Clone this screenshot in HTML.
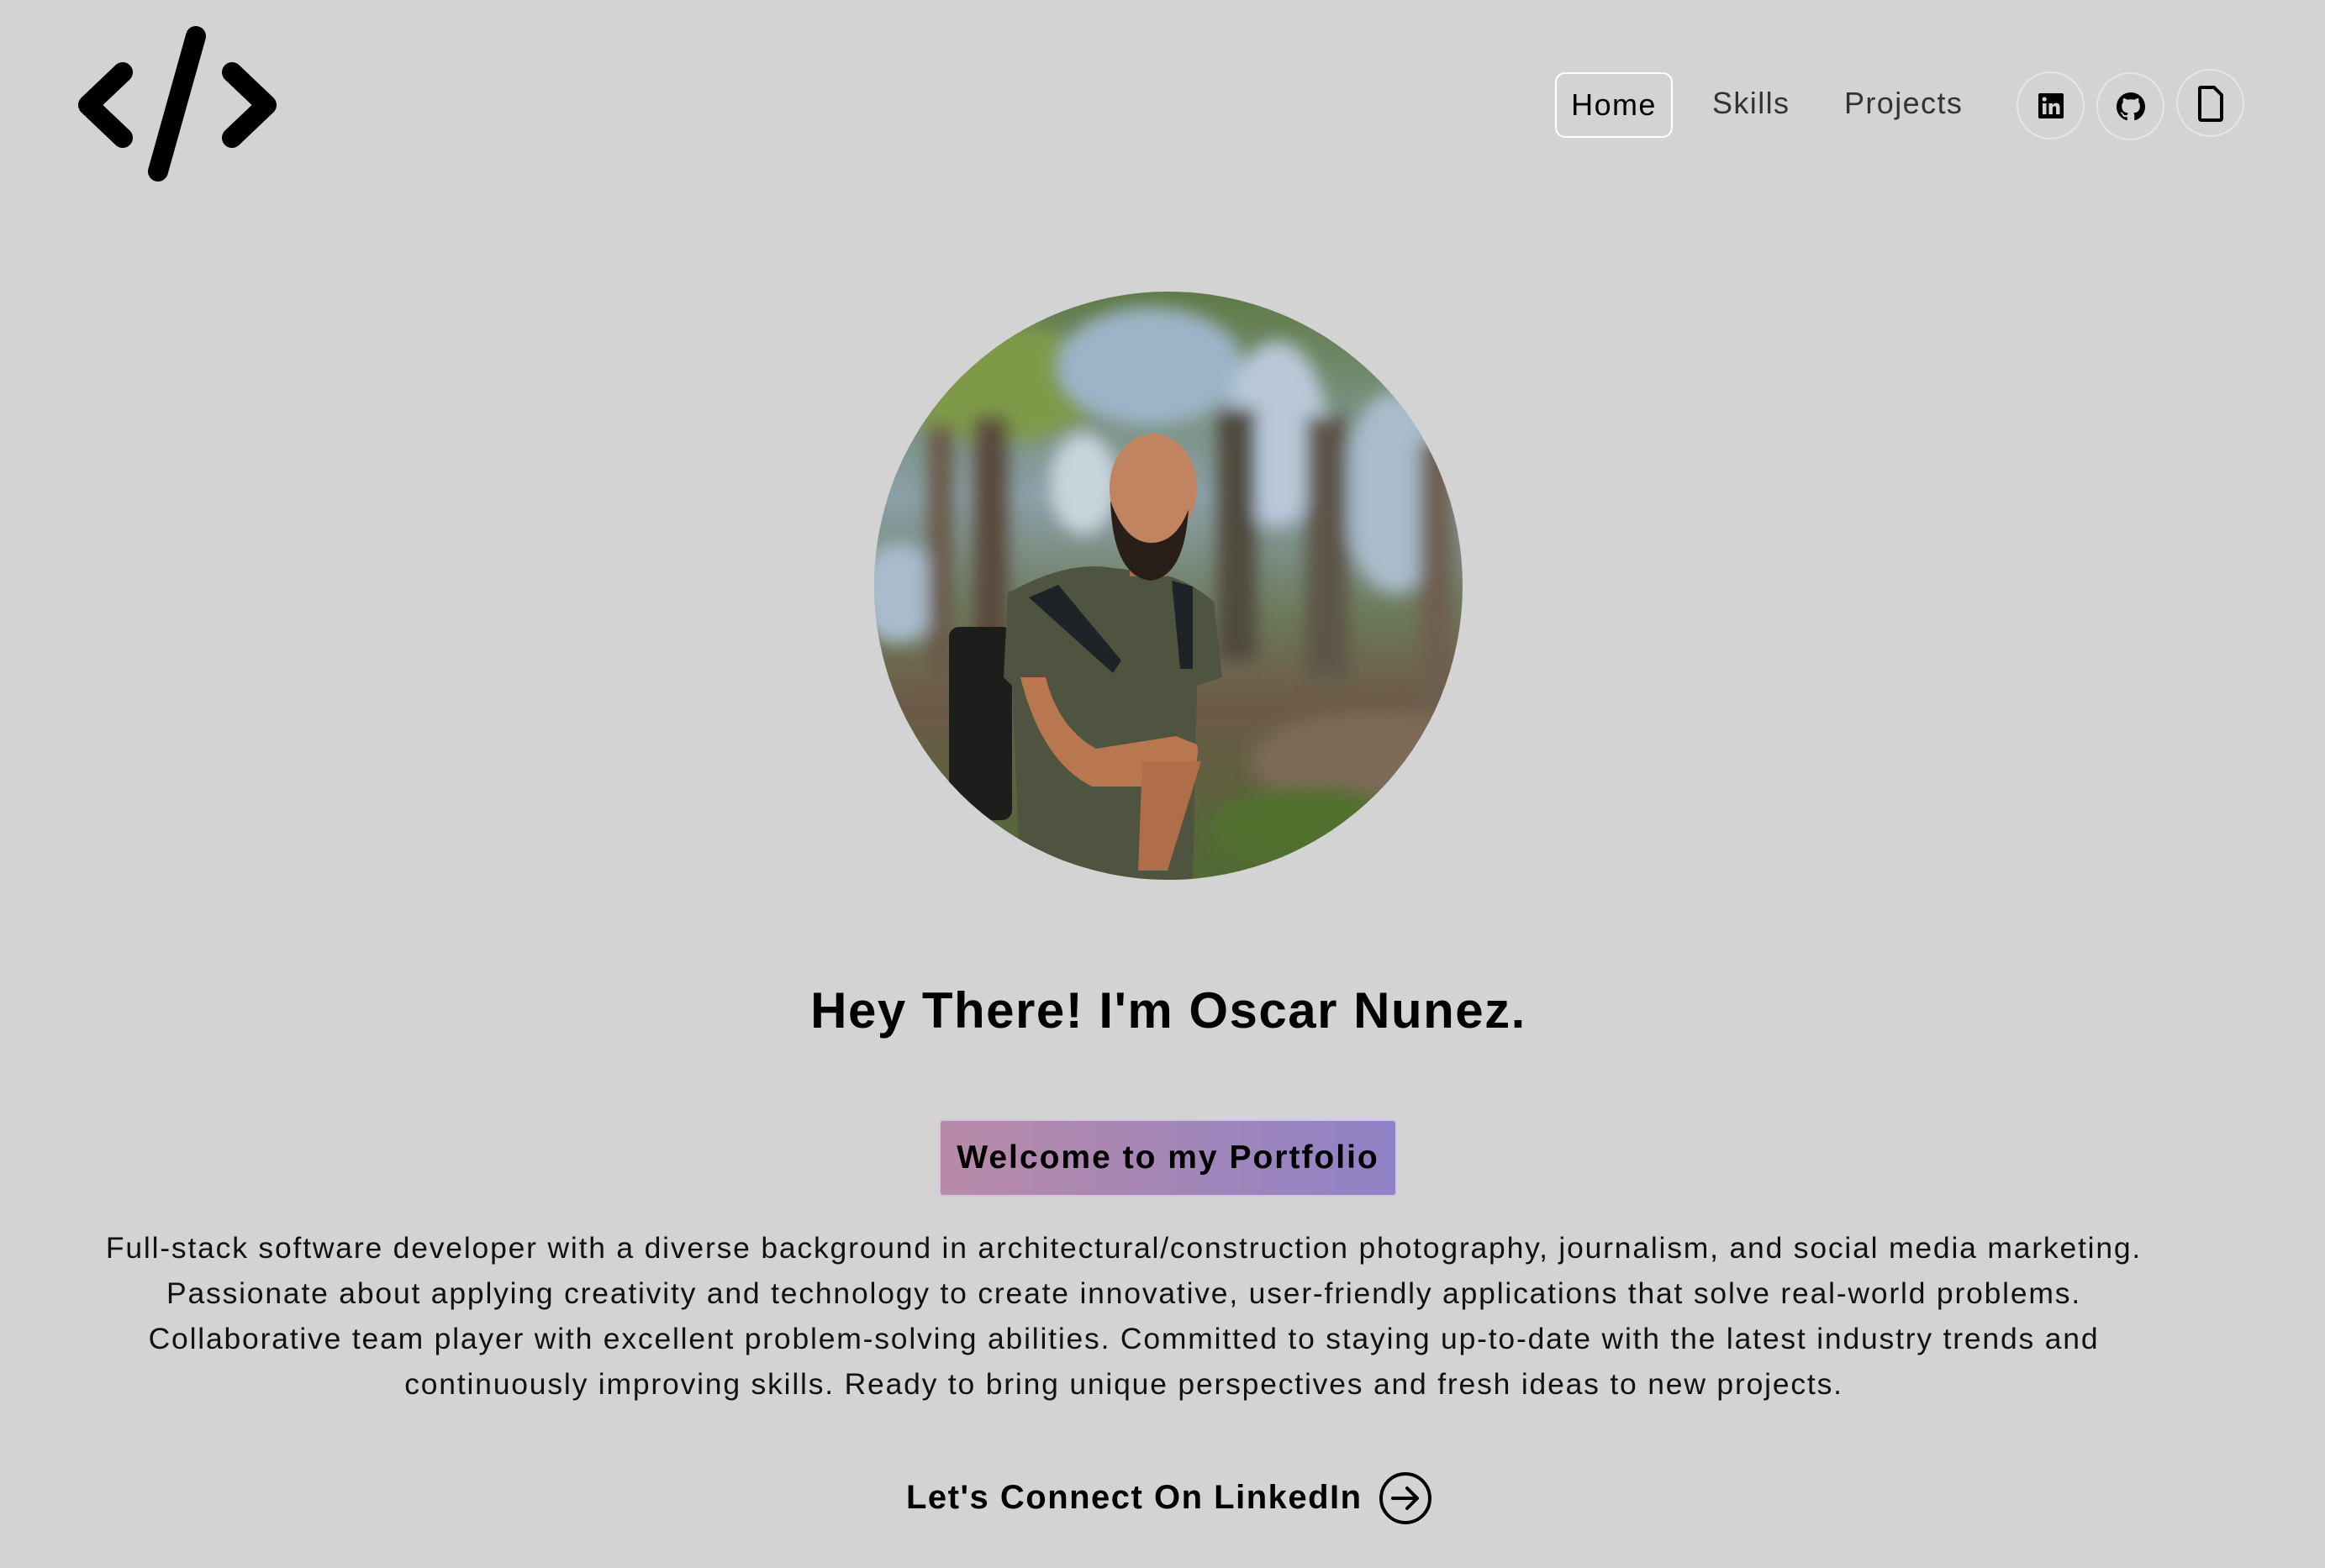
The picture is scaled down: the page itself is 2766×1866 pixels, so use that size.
<!DOCTYPE html>
<html><head><meta charset="utf-8"><style>
html,body{margin:0;padding:0;background:#d3d3d3;width:2766px;height:1866px;overflow:hidden;font-family:"Liberation Sans",Arial,sans-serif;color:#000}
.abs{position:absolute}
.nav{font-size:36px;letter-spacing:1.4px;color:#333}
.home{left:1850px;top:86px;width:136px;height:74px;border:2px solid #fff;border-radius:12px;color:#000;display:flex;align-items:center;justify-content:center;box-sizing:content-box}
.ic{width:81px;height:81px;border:2px solid #e6e6e6;border-radius:50%;display:flex;align-items:center;justify-content:center;box-sizing:border-box}
.c{left:0;width:2766px;text-align:center;white-space:nowrap}
</style></head><body>
<svg class="abs" style="left:0;top:0" width="400" height="240" viewBox="0 0 400 240">
<g fill="none" stroke="#000" stroke-width="24" stroke-linecap="round" stroke-linejoin="round">
<polyline points="146,86 105,125 146,164"/>
<line x1="233" y1="43" x2="188" y2="204"/>
<polyline points="276,86 317,125 276,164"/>
</g></svg>

<div class="abs nav home">Home</div>
<div class="abs nav" style="left:2037px;top:102px">Skills</div>
<div class="abs nav" style="left:2194px;top:102px">Projects</div>

<div class="abs ic" style="left:2399px;top:85px"><svg width="32" height="32" viewBox="0 0 32 32"><rect x="1" y="1" width="30" height="30" rx="2" fill="#000"/><rect x="6" y="13" width="4.5" height="13" fill="#d3d3d3"/><circle cx="8.2" cy="8" r="2.6" fill="#d3d3d3"/><path d="M13.5 13h4.3v2c1-1.6 2.6-2.4 4.4-2.4 3.4 0 4.3 2.2 4.3 5.3V26h-4.4v-7c0-1.6-.4-2.8-1.9-2.8s-2.3 1.1-2.3 2.8v7h-4.4z" fill="#d3d3d3"/></svg></div>
<div class="abs ic" style="left:2494px;top:86px"><svg width="34" height="34" viewBox="0 0 16 16"><path fill="#000" d="M8 0C3.58 0 0 3.580 0 8c0 3.54 2.29 6.53 5.47 7.59.4.07.55-.17.55-.38 0-.19-.01-.82-.01-1.49-2.01.37-2.530-.49-2.69-.94-.09-.23-.48-.94-.82-1.130-.28-.15-.68-.52-.01-.53.63-.01 1.08.58 1.23.82.72 1.21 1.87.87 2.330.66.07-.52.28-.87.51-1.07-1.78-.2-3.64-.89-3.64-3.950 0-.87.31-1.59.82-2.15-.08-.2-.36-1.02.08-2.12 0 0 .67-.21 2.2.82.64-.18 1.32-.27 2-.27.68 0 1.36.09 2 .27 1.53-1.04 2.2-.82 2.2-.82.44 1.1.16 1.92.08 2.12.51.56.82 1.27.82 2.150 0 3.07-1.87 3.75-3.65 3.95.29.25.54.73.54 1.48 0 1.07-.01 1.93-.01 2.2 0 .21.15.46.55.38A8.013 8.013 0 0016 8c0-4.42-3.58-8-8-8z"/></svg></div>
<div class="abs ic" style="left:2589px;top:82px"><svg width="34" height="44" viewBox="0 0 34 44"><path d="M5 3h16l9 9v28a2 2 0 0 1-2 2H6a2 2 0 0 1-2-2V5a2 2 0 0 1 1-2z" fill="none" stroke="#000" stroke-width="4" stroke-linejoin="round"/></svg></div>

<svg class="abs" style="left:1039px;top:346px" width="702" height="702" viewBox="0 0 702 702">
<defs><clipPath id="cp"><circle cx="351" cy="351" r="350"/></clipPath>
<linearGradient id="bg" x1="0" y1="0" x2="0" y2="1"><stop offset="0" stop-color="#5f7a45"/><stop offset=".35" stop-color="#8aa0a8"/><stop offset=".55" stop-color="#6c7a5a"/><stop offset=".7" stop-color="#6d5a48"/><stop offset="1" stop-color="#4f6a35"/></linearGradient>
<filter id="bl"><feGaussianBlur stdDeviation="10"/></filter></defs>
<g clip-path="url(#cp)">
<rect width="702" height="702" fill="url(#bg)"/>
<g filter="url(#bl)">
<ellipse cx="150" cy="110" rx="130" ry="70" fill="#7e9a4a"/>
<ellipse cx="330" cy="90" rx="110" ry="70" fill="#9db4c8"/>
<ellipse cx="480" cy="170" rx="60" ry="110" fill="#b8c8d8"/>
<ellipse cx="620" cy="240" rx="60" ry="120" fill="#a9bccb"/>
<ellipse cx="30" cy="360" rx="50" ry="60" fill="#a8bccc"/>
<ellipse cx="250" cy="230" rx="40" ry="60" fill="#c8d4dc"/>
<rect x="120" y="150" width="40" height="330" fill="#5a4a3e"/>
<rect x="65" y="160" width="30" height="300" fill="#6b5a4a"/>
<rect x="410" y="140" width="45" height="300" fill="#4f4a3e"/>
<rect x="515" y="150" width="50" height="310" fill="#5d5447"/>
<rect x="650" y="180" width="40" height="380" fill="#6e5f50"/>
<ellipse cx="600" cy="560" rx="150" ry="60" fill="#7d6a58"/>
<ellipse cx="520" cy="640" rx="120" ry="50" fill="#51702e"/>
</g>
<rect x="90" y="400" width="75" height="230" rx="12" fill="#1c1e1c"/>
<path d="M160 360 Q230 320 285 330 L330 335 Q370 340 405 370 L415 460 L385 470 L380 702 L175 702 L165 470 L155 460Z" fill="#4e5440"/>
<path d="M185 365 L220 350 L295 440 L285 455Z" fill="#1f2226"/>
<path d="M355 345 L380 352 L380 450 L365 450Z" fill="#1f2226"/>
<path d="M175 460 Q200 560 260 590 L370 590 Q390 560 385 540 L360 530 L265 545 Q220 520 205 460Z" fill="#b8774f"/>
<path d="M320 560 L390 560 L350 690 L315 690Z" fill="#b06e48"/>
<rect x="305" y="290" width="45" height="50" fill="#a86c4c"/>
<ellipse cx="333" cy="235" rx="52" ry="65" fill="#c08460"/>
<path d="M282 250 Q285 340 330 345 Q370 340 375 260 Q360 300 330 300 Q300 300 282 250Z" fill="#2a1e18"/>
</g></svg>

<div class="abs c" style="left:7px;top:1168px;font-size:60px;font-weight:bold;letter-spacing:1.5px">Hey There! I'm Oscar Nunez.</div>

<div class="abs" style="left:1117px;top:1332px;width:545px;height:92px;border-radius:5px;background:linear-gradient(90deg,#b98aa8,#8f82c6);border:2px solid #d2c4e0;box-sizing:border-box;display:flex;align-items:center;justify-content:center;font-size:39px;font-weight:bold;letter-spacing:2px;white-space:nowrap">Welcome to my Portfolio</div>

<div class="abs c" style="left:-46px;top:1458px;font-size:35.5px;line-height:54px;letter-spacing:1.8px;color:#111">
Full-stack software developer with a diverse background in architectural/construction photography, journalism, and social media marketing.<br>
Passionate about applying creativity and technology to create innovative, user-friendly applications that solve real-world problems.<br>
Collaborative team player with excellent problem-solving abilities. Committed to staying up-to-date with the latest industry trends and<br>
continuously improving skills. Ready to bring unique perspectives and fresh ideas to new projects.</div>

<div class="abs" style="left:1078px;top:1760px;font-size:40px;font-weight:bold;letter-spacing:1.5px;white-space:nowrap">Let's Connect On LinkedIn</div>
<svg class="abs" style="left:1640px;top:1751px" width="64" height="64" viewBox="0 0 64 64"><circle cx="32" cy="32" r="29" fill="none" stroke="#000" stroke-width="4"/><path d="M17 32h29M34 20l12 12-12 12" fill="none" stroke="#000" stroke-width="4" stroke-linecap="round" stroke-linejoin="round"/></svg>
</body></html>
